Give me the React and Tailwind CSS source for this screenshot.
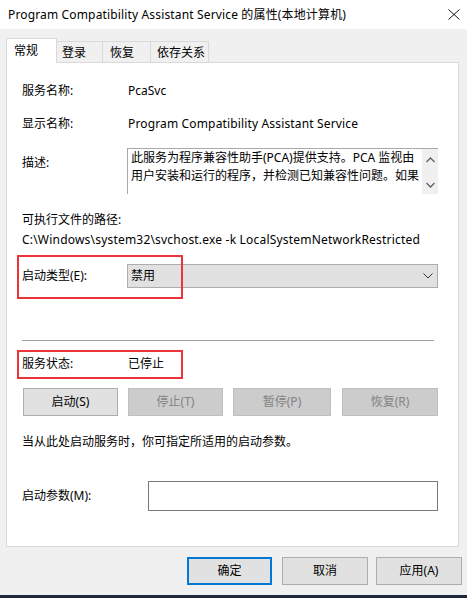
import React from 'react';

const font = { fontFamily: '"Noto Sans", "Noto Sans CJK SC", sans-serif' };

function Btn({ children, disabled, width, primary }) {
  return (
    <div
      className={`flex h-[28px] items-center justify-center border text-[12px] ${
        disabled
          ? 'border-[#bfbfbf] bg-[#cccccc] text-[#838383]'
          : primary
          ? 'border-2 border-[#0078d7] bg-[#e1e1e1] text-black'
          : 'border-[#adadad] bg-[#e1e1e1] text-black'
      } ${width}`}
    >
      {children}
    </div>
  );
}

function Chevron({ up }) {
  return (
    <svg width="9" height="6" viewBox="0 0 9 6" className="block">
      <path
        d={up ? 'M0.5 5 L4.5 1 L8.5 5' : 'M0.5 1 L4.5 5 L8.5 1'}
        fill="none"
        stroke="#606060"
        strokeWidth="1.3"
      />
    </svg>
  );
}

export default function App() {
  return (
    <div className="flex h-[598px] w-[467px] flex-col overflow-hidden bg-[#f0f0f0] text-[12px] text-black" style={font}>
      {/* Title bar */}
      <div className="flex h-[29px] items-center justify-between bg-white pl-[8px] pr-[7px]">
        <span className="text-[12px] tracking-[0.15px]">Program Compatibility Assistant Service 的属性(本地计算机)</span>
        <svg width="12" height="11" viewBox="0 0 12 11">
          <path d="M0.5 0.5 L11.5 10.5 M11.5 0.5 L0.5 10.5" stroke="#111" strokeWidth="1" fill="none" />
        </svg>
      </div>

      {/* Tabs */}
      <div className="relative z-10 mt-[9px] flex items-end pl-[6px]">
        <div className="h-[25px] w-[51px] border border-b-0 border-[#d9d9d9] bg-white pl-[7px] leading-[24px]">常规</div>
        <div className="h-[22px] w-[46px] border border-l-0 border-b-0 border-[#d9d9d9] pl-[5px] leading-[21px]">登录</div>
        <div className="h-[22px] w-[48px] border border-l-0 border-b-0 border-[#d9d9d9] pl-[7px] leading-[21px]">恢复</div>
        <div className="h-[22px] w-[58px] border border-l-0 border-b-0 border-[#d9d9d9] pl-[6px] leading-[21px]">依存关系</div>
      </div>

      {/* Panel */}
      <div className="relative mx-[6px] -mt-px h-[485px] w-[453px] border border-[#d9d9d9] bg-white pl-[15px] pr-[20px]">
        <div className="mt-[18px] flex h-[20px] items-center">
          <span className="w-[106px]">服务名称:</span>
          <span>PcaSvc</span>
        </div>
        <div className="mt-[13px] flex h-[20px] items-center">
          <span className="w-[106px]">显示名称:</span>
          <span className="tracking-[0.15px]">Program Compatibility Assistant Service</span>
        </div>

        <div className="mt-[14px] flex">
          <span className="w-[105px] pt-[6px] leading-[18px]">描述:</span>
          <div className="flex h-[46px] flex-1 border-l border-t border-[#a9a9a9]">
            <div className="flex-1 overflow-hidden whitespace-nowrap pl-[3px] leading-[18px]">
              <div>此服务为程序兼容性助手(PCA)提供支持。PCA 监视由</div>
              <div>用户安装和运行的程序，并检测已知兼容性问题。如果</div>
            </div>
            <div className="flex w-[16px] flex-col items-center justify-between bg-[#f0f0f0] pb-[6px] pt-[8px]">
              <Chevron up />
              <Chevron />
            </div>
          </div>
        </div>

        <div className="mt-[16px] flex h-[20px] items-center">可执行文件的路径:</div>
        <div className="flex h-[20px] items-center whitespace-nowrap tracking-[0.2px]">C:\Windows\system32\svchost.exe -k LocalSystemNetworkRestricted</div>

        <div className="mt-[14px] flex h-[24px] items-center">
          <span className="w-[105px]">启动类型(E):</span>
          <div className="flex h-[24px] flex-1 items-center justify-between border border-[#adadad] bg-[#e1e1e1] pl-[3px] pr-[4px]">
            <span>禁用</span>
            <svg width="10" height="6" viewBox="0 0 10 6">
              <path d="M0.5 0.5 L5 5 L9.5 0.5" fill="none" stroke="#333" strokeWidth="1" />
            </svg>
          </div>
        </div>

        <div className="mr-[4px] mt-[52px] h-px bg-[#a0a0a0]" />

        <div className="mt-[13px] flex h-[20px] items-center">
          <span className="w-[106px]">服务状态:</span>
          <span>已停止</span>
        </div>

        <div className="ml-px mt-[14px] flex">
          <Btn width="w-[95px]">启动(S)</Btn>
          <div className="ml-[10px]"><Btn disabled width="w-[95px]">停止(T)</Btn></div>
          <div className="ml-[10px]"><Btn disabled width="w-[98px]">暂停(P)</Btn></div>
          <div className="ml-[11px]"><Btn disabled width="w-[96px]">恢复(R)</Btn></div>
        </div>

        <div className="mt-[16px] flex h-[20px] items-center">当从此处启动服务时，你可指定所适用的启动参数。</div>

        <div className="mt-[29px] flex h-[30px] items-center">
          <span className="w-[126px]">启动参数(M):</span>
          <div className="h-[30px] flex-1 border border-[#7a7a7a] bg-white" />
        </div>

        {/* Annotation boxes */}
        <div className="pointer-events-none absolute left-[10px] top-[192px] h-[44px] w-[166px] border-2 border-[#ee3338]" />
        <div className="pointer-events-none absolute left-[10px] top-[287px] h-[29px] w-[166px] border-2 border-[#ee3338]" />
      </div>

      {/* Footer buttons */}
      <div className="mt-[10px] flex pl-[187px]">
        <Btn primary width="w-[85px]">确定</Btn>
        <div className="ml-[10px]"><Btn width="w-[86px]">取消</Btn></div>
        <div className="ml-[8px]"><Btn width="w-[86px]">应用(A)</Btn></div>
      </div>

      <div className="mt-auto h-[3px] bg-[#1c2a3a]" />
    </div>
  );
}
